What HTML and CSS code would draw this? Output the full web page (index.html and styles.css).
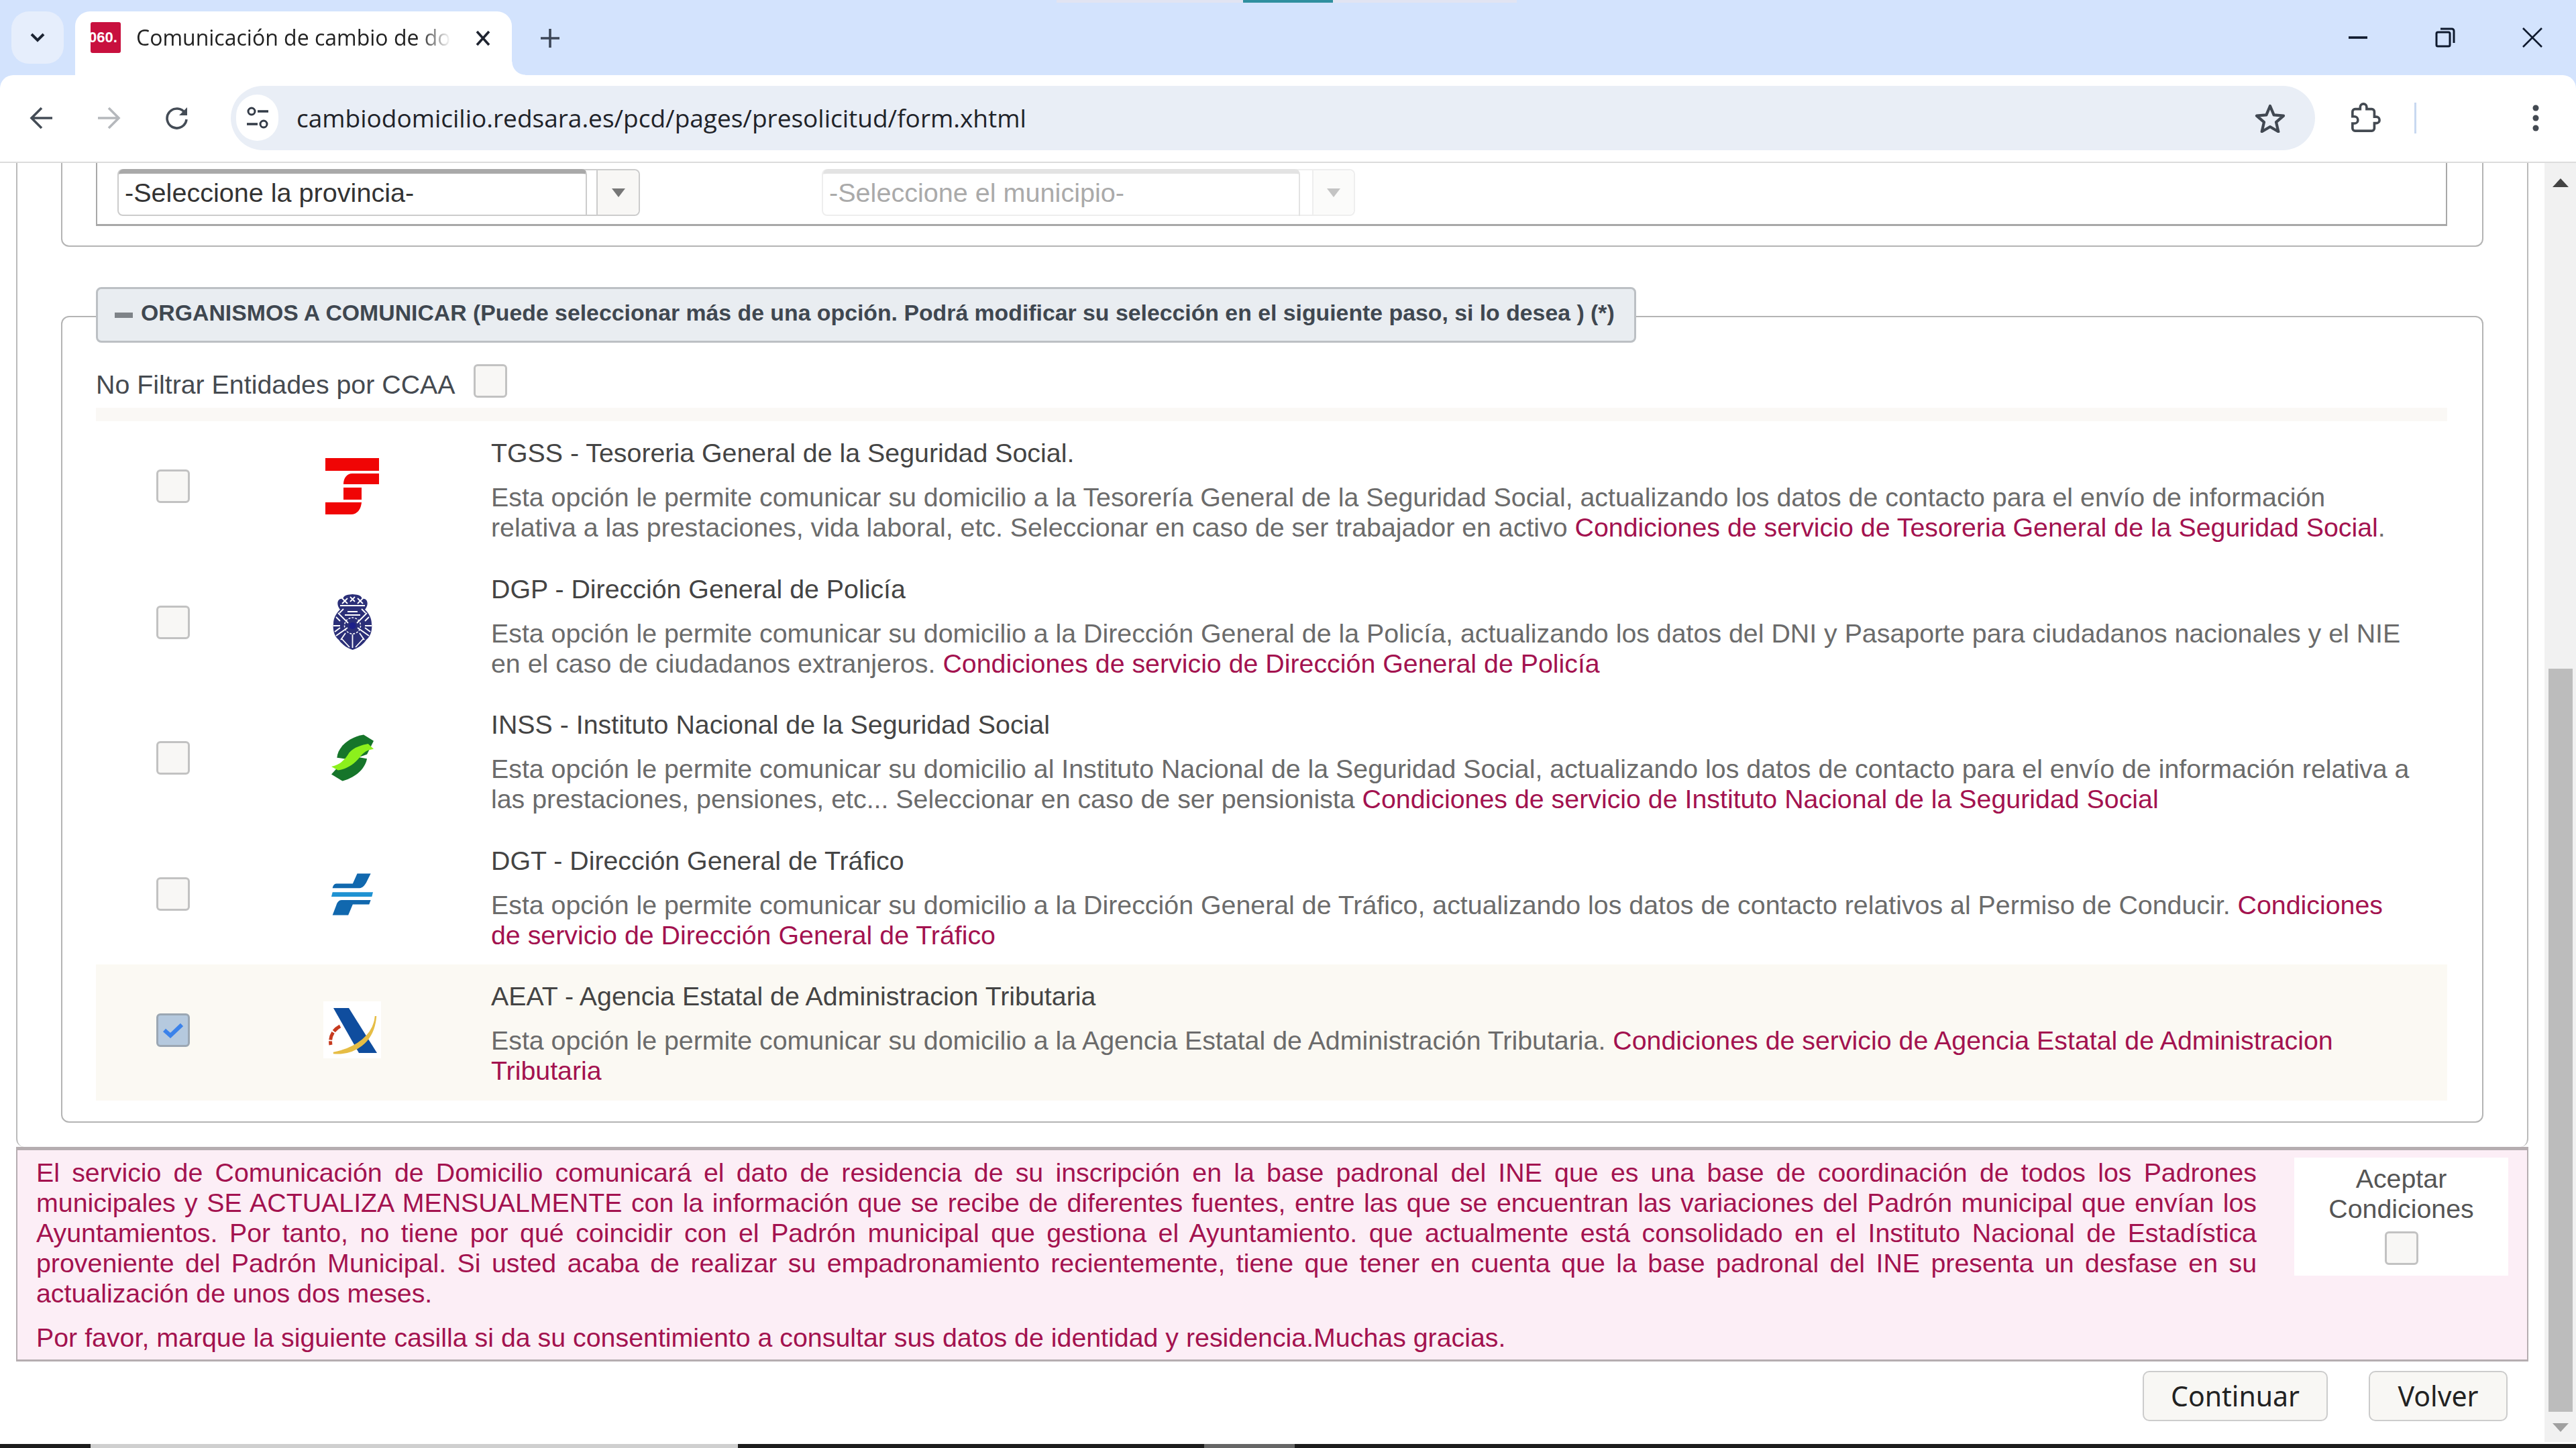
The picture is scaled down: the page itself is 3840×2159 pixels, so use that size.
FILE: index.html
```html
<!DOCTYPE html>
<html lang="es">
<head>
<meta charset="utf-8">
<title>Comunicación de cambio de domicilio</title>
<link rel="stylesheet" href="styles.css">
</head>
<body>
<div class="page">
  <header class="chrome">
    <div class="capture-bar"><span class="capture-active"></span></div>
    <div class="tabstrip">
      <button class="tab-search"><svg width="24" height="16" viewBox="0 0 24 16"><path d="M3 3l9 9 9-9" fill="none" stroke="#1c2433" stroke-width="4"/></svg></button>
      <div class="tab">
        <span class="favicon">060.</span>
        <span class="tab-title">Comunicación de cambio de domicilio</span>
        <svg class="tab-close" width="24" height="24" viewBox="0 0 24 24"><path d="M3 2l18 20M21 2L3 22" stroke="#1f2430" stroke-width="3.6" fill="none"/></svg>
      </div>
      <svg class="new-tab" width="32" height="32" viewBox="0 0 32 32"><path d="M16 2v28M2 16h28" stroke="#3c4657" stroke-width="3.6" fill="none"/></svg>
      <div class="window-controls">
        <svg width="30" height="30" viewBox="0 0 30 30"><path d="M1 15h28" stroke="#0f1a2e" stroke-width="3.6"/></svg>
        <svg width="30" height="30" viewBox="0 0 30 30"><rect x="2" y="7" width="20" height="21" rx="2" fill="none" stroke="#0f1a2e" stroke-width="3"/><path d="M8 2h17a3 3 0 0 1 3 3v18" fill="none" stroke="#0f1a2e" stroke-width="3"/></svg>
        <svg width="30" height="30" viewBox="0 0 30 30"><path d="M1 1l28 28M29 1L1 29" stroke="#0f1a2e" stroke-width="2.6"/></svg>
      </div>
    </div>
    <div class="toolbar">
      <svg class="nav nav-back" width="36" height="36" viewBox="0 0 36 36"><path d="M34 18H5M18 3L3 18l15 15" fill="none" stroke="#444c56" stroke-width="3.6"/></svg>
      <svg class="nav nav-forward" width="36" height="36" viewBox="0 0 36 36"><path d="M2 18h29M18 3l15 15-15 15" fill="none" stroke="#b5b8bc" stroke-width="3.6"/></svg>
      <svg class="nav nav-reload" width="36" height="36" viewBox="0 0 36 36"><path d="M30 11A14.500 14.500 0 1 0 32 20" fill="none" stroke="#444c56" stroke-width="3.6"/><path d="M33 2v12H21z" fill="#444c56"/></svg>
      <div class="omnibox">
        <span class="site-info"><svg width="34" height="36" viewBox="0 0 34 36"><circle cx="8" cy="8" r="5" fill="none" stroke="#333b47" stroke-width="3"/><path d="M17 8h16M1 27h16" stroke="#333b47" stroke-width="3.600"/><circle cx="26" cy="27" r="5" fill="none" stroke="#333b47" stroke-width="3"/></svg></span>
        <span class="url">cambiodomicilio.redsara.es/pcd/pages/presolicitud/form.xhtml</span>
        <svg class="star" width="46" height="44" viewBox="0 0 46 44"><path d="M23 4l5.600 13.400 14.400 1.200-11 9.500 3.300 14.100L23 35l-12.300 7.200 3.300-14.100-11-9.500 14.400-1.200z" fill="none" stroke="#414852" stroke-width="4.200" stroke-linejoin="round"/></svg>
      </div>
      <svg class="extensions" width="46" height="46" viewBox="0 0 24 24"><path d="M20.500 11H19V7c0-1.100-.9-2-2-2h-4V3.500C13 2.120 11.880 1 10.500 1S8 2.120 8 3.500V5H4c-1.100 0-1.990.9-1.990 2v3.800H3.500c1.490 0 2.700 1.210 2.700 2.700s-1.210 2.700-2.700 2.700H2V20c0 1.100.9 2 2 2h13c1.100 0 2-.9 2-2v-4h1.500c1.380 0 2.500-1.120 2.500-2.500S21.880 11 20.500 11z" fill="none" stroke="#444a52" stroke-width="1.900"/></svg>
      <span class="toolbar-sep"></span>
      <svg class="menu-dots" width="10" height="40" viewBox="0 0 10 40"><circle cx="5" cy="5" r="4.500" fill="#444a52"/><circle cx="5" cy="20" r="4.500" fill="#444a52"/><circle cx="5" cy="35" r="4.500" fill="#444a52"/></svg>
    </div>
  </header>

  <div class="viewport">
    <main class="main">
      <section class="panel">
        <div class="fieldset-location">
          <div class="location-inner">
            <div class="select select-active">
              <span class="select-value">-Seleccione la provincia-</span>
              <span class="select-trigger"><span class="caret"></span></span>
            </div>
            <div class="select select-disabled">
              <span class="select-value">-Seleccione el municipio-</span>
              <span class="select-trigger"><span class="caret"></span></span>
            </div>
          </div>
        </div>

        <div class="organisms">
          <div class="legend">
            <span class="legend-minus"></span>
            <span class="legend-text">ORGANISMOS A COMUNICAR (Puede seleccionar más de una opción. Podrá modificar su selección en el siguiente paso, si lo desea ) (*)</span>
          </div>
          <div class="organisms-box">
            <div class="filter-row">
              <label class="filter-label">No Filtrar Entidades por CCAA</label>
              <span class="check"></span>
            </div>
            <div class="table-head"></div>

            <div class="org-row">
              <div class="cell-check"><span class="check"></span></div>
              <div class="cell-logo">
                <svg width="80" height="84" viewBox="0 0 80 84"><path d="M0 0h80v19H0zM40 23h40v16H27c0-9 5-16 13-16zM27 44h27v18H27zM0 66h54c-1 10-6 18-16 18H0z" fill="#f00505"/></svg>
              </div>
              <div class="cell-text">
                <h3 class="org-title">TGSS - Tesoreria General de la Seguridad Social.</h3>
                <p class="org-desc">Esta opción le permite comunicar su domicilio a la Tesorería General de la Seguridad Social, actualizando los datos de contacto para el envío de información relativa a las prestaciones, vida laboral, etc. Seleccionar en caso de ser trabajador en activo <a class="org-link">Condiciones de servicio de Tesoreria General de la Seguridad Social</a>.</p>
              </div>
            </div>

            <div class="org-row">
              <div class="cell-check"><span class="check"></span></div>
              <div class="cell-logo">
                <svg width="59" height="83" viewBox="0 0 59 83"><path d="M12 24C4 16 7 5 15 7c2-7 9-6 14.500-7C35 1 42 0 44 7c8-2 11 9 3 17z" fill="#2b2f78"/><path d="M29.500 83C20 80 13 74 9 68 1 62 0 50 1 44c0-8 4-16 11-22h35c7 6 11 14 11 22 1 6 0 18-8 24-4 6-11 12-20.500 15z" fill="#2b2f78"/><g fill="none" stroke="#fff" stroke-width="1.800"><path d="M14 6l8 8M22 6l-8 8M26 4l7 7M33 4l-7 7M37 6l8 8M45 6l-8 8M11 17h37M8 28l15 15M51 28L36 43M5 34l6 6M54 34l-6 6M5 62l17-12M54 62L37 50M29.500 60v20M13 66l12 13M46 66L34 79M1 47h10M48 47h10M3 56l8-6M56 56l-8-6M16 22l-6 6M43 22l6 6M19 58l-7 10M40 58l7 10M22 26h15M18 31h23"/><circle cx="29.500" cy="47" r="12" stroke-width="1.500" stroke-dasharray="3 2"/></g><circle cx="29.500" cy="47" r="5" fill="#1c1f8a"/></svg>
              </div>
              <div class="cell-text">
                <h3 class="org-title">DGP - Dirección General de Policía</h3>
                <p class="org-desc">Esta opción le permite comunicar su domicilio a la Dirección General de la Policía, actualizando los datos del DNI y Pasaporte para ciudadanos nacionales y el NIE en el caso de ciudadanos extranjeros. <a class="org-link">Condiciones de servicio de Dirección General de Policía</a></p>
              </div>
            </div>

            <div class="org-row">
              <div class="cell-check"><span class="check"></span></div>
              <div class="cell-logo">
                <svg width="63" height="82" viewBox="0 0 190 208"><path d="M25 103C30 50 85 10 145 0l45 28-30 60-70 25z" fill="#16752a"/><path d="M160 108c-10 52-60 87-110 100L0 178l45-50 60-30z" fill="#16752a"/><path d="M0 143c40-10 62-30 80-62 20-25 60-35 85-40l25 23c-40 6-50 22-70 46-30 34-70 48-90 50z" fill="#8cf01c"/></svg>
              </div>
              <div class="cell-text">
                <h3 class="org-title">INSS - Instituto Nacional de la Seguridad Social</h3>
                <p class="org-desc">Esta opción le permite comunicar su domicilio al Instituto Nacional de la Seguridad Social, actualizando los datos de contacto para el envío de información relativa a las prestaciones, pensiones, etc... Seleccionar en caso de ser pensionista <a class="org-link">Condiciones de servicio de Instituto Nacional de la Seguridad Social</a></p>
              </div>
            </div>

            <div class="org-row">
              <div class="cell-check"><span class="check"></span></div>
              <div class="cell-logo">
                <svg width="62" height="73" viewBox="0 0 185 185"><path d="M22 45h73l20-45h60l-20 40c-10 18-20 25-35 25H5c2-10 8-20 17-20z" fill="#1168ae"/><path d="M5 83h180l-5 20H0z" fill="#1f92d2"/><path d="M45 118h130l-7 19H95l-20 48H5l17-45c4-12 12-22 23-22z" fill="#1168ae"/></svg>
              </div>
              <div class="cell-text">
                <h3 class="org-title">DGT - Dirección General de Tráfico</h3>
                <p class="org-desc">Esta opción le permite comunicar su domicilio a la Dirección General de Tráfico, actualizando los datos de contacto relativos al Permiso de Conducir. <a class="org-link">Condiciones de servicio de Dirección General de Tráfico</a></p>
              </div>
            </div>

            <div class="org-row org-row-selected">
              <div class="cell-check"><span class="check check-on"><svg width="30" height="24" viewBox="0 0 30 24"><path d="M2 12l9 8L28 4" fill="none" stroke="#3b82ea" stroke-width="6"/></svg></span></div>
              <div class="cell-logo">
                <svg width="86" height="85" viewBox="0 0 86 85"><rect width="86" height="85" fill="#fff"/><path d="M15 10h23l42 67H53z" fill="#0f4d9e"/><path d="M78 22C76 50 50 70 15 77c30 3 60-15 63-55z" fill="#e6bd45" stroke="#e6bd45" stroke-width="2.500"/><path d="M25 37C14 43 9 53 11 65" fill="none" stroke="#c63a1e" stroke-width="5" stroke-dasharray="12 2"/></svg>
              </div>
              <div class="cell-text">
                <h3 class="org-title">AEAT - Agencia Estatal de Administracion Tributaria</h3>
                <p class="org-desc">Esta opción le permite comunicar su domicilio a la Agencia Estatal de Administración Tributaria. <a class="org-link">Condiciones de servicio de Agencia Estatal de Administracion Tributaria</a></p>
              </div>
            </div>
          </div>
        </div>
      </section>

      <section class="notice">
        <div class="notice-text">
          <p class="notice-main">El servicio de Comunicación de Domicilio comunicará el dato de residencia de su inscripción en la base padronal del INE que es una base de coordinación de todos los Padrones municipales y SE ACTUALIZA MENSUALMENTE con la información que se recibe de diferentes fuentes, entre las que se encuentran las variaciones del Padrón municipal que envían los Ayuntamientos. Por tanto, no tiene por qué coincidir con el Padrón municipal que gestiona el Ayuntamiento. que actualmente está consolidado en el Instituto Nacional de Estadística proveniente del Padrón Municipal. Si usted acaba de realizar su empadronamiento recientemente, tiene que tener en cuenta que la base padronal del INE presenta un desfase en su actualización de unos dos meses.</p>
          <p class="notice-second">Por favor, marque la siguiente casilla si da su consentimiento a consultar sus datos de identidad y residencia.Muchas gracias.</p>
        </div>
        <div class="accept">
          <span class="accept-label">Aceptar Condiciones</span>
          <span class="check"></span>
        </div>
      </section>

      <div class="actions">
        <button class="btn btn-continue">Continuar</button>
        <button class="btn btn-back">Volver</button>
      </div>
    </main>

    <aside class="scrollbar">
      <span class="arrow-up"></span>
      <span class="thumb"></span>
      <span class="arrow-down"></span>
    </aside>
  </div>

  <footer class="taskbar">
    <span class="task task-a"></span>
    <span class="task task-b"></span>
    <span class="task task-c"></span>
    <span class="task task-d"></span>
    <span class="task task-e"></span>
  </footer>
</div>
</body>
</html>
```

FILE: styles.css
```css
* { box-sizing: border-box; }
html, body { margin: 0; padding: 0; background: #fff; }
body { font-family: "Liberation Sans", Arial, sans-serif; }
h3, p { margin: 0; font-weight: normal; }
button { font: inherit; }

.page { width: 3840px; height: 2159px; display: flex; flex-direction: column; overflow: hidden; }

/* Browser chrome */
.chrome { position: relative; height: 243px; flex: none; background: #d3e3fd; }
.capture-bar { position: absolute; top: 0; left: 1575px; width: 686px; height: 4px; background: #e1e4f2; }
.capture-active { position: absolute; top: 0; left: 278px; width: 134px; height: 4px; background: #2f8f9f; }
.tabstrip { height: 112px; display: flex; align-items: flex-start; padding: 17px 0 0 17px; }
.tab-search { width: 78px; height: 78px; border: 0; border-radius: 26px; background: #e6eefc; display: flex; align-items: center; justify-content: center; padding: 0; }
.tab { position: relative; width: 651px; height: 95px; margin-left: 17px; background: #fff; border-radius: 22px 22px 0 0; display: flex; align-items: flex-start; padding: 16px 0 0 23px; }
.tab::after { content: ""; position: absolute; right: -20px; bottom: 0; width: 20px; height: 20px; background: radial-gradient(circle at 100% 0, transparent 19px, #fff 20px); }
.favicon { width: 45px; height: 46px; background: #c8103e; color: #fff; font: bold 22px/46px "Liberation Sans Narrow", "Liberation Sans", sans-serif; overflow: hidden; border-radius: 3px; flex: none; white-space: nowrap; text-indent: -3px; }
.tab-title { width: 469px; margin-left: 23px; font: 32px/46px "Open Sans", sans-serif; color: #222; white-space: nowrap; overflow: hidden; flex: none; -webkit-mask-image: linear-gradient(90deg, #000 90%, transparent); mask-image: linear-gradient(90deg, #000 90%, transparent); }
.tab-close { margin: 12px 0 0 36px; flex: none; }
.new-tab { margin: 24px 0 0 41px; flex: none; }
.window-controls { margin-left: auto; display: flex; gap: 100px; padding: 24px 50px 0 0; }

.toolbar { height: 131px; background: #fff; border-radius: 20px 20px 0 0; border-bottom: 2px solid #dcdcdc; display: flex; align-items: center; padding-bottom: 2px; }
.nav { flex: none; }
.nav-back { margin-left: 44px; }
.nav-forward { margin-left: 64px; }
.nav-reload { margin-left: 66px; }
.omnibox { width: 3107px; height: 96px; margin-left: 62px; background: #e9eef6; border-radius: 48px; display: flex; align-items: center; padding-left: 8px; flex: none; }
.site-info { width: 63px; height: 69px; background: #fff; border-radius: 34px; display: flex; align-items: center; justify-content: center; flex: none; }
.url { margin-left: 27px; font: 37px/48px "Open Sans", sans-serif; color: #1f2329; white-space: nowrap; flex: none; }
.star { margin-left: auto; margin-right: 44px; flex: none; }
.extensions { margin-left: 52px; flex: none; }
.toolbar-sep { width: 3px; height: 46px; margin-left: 50px; background: #c8d8f0; flex: none; }
.menu-dots { margin-left: 173px; flex: none; }

/* Page content */
.viewport { flex: 1; display: flex; min-height: 0; }
.main { width: 3793px; padding-left: 24px; flex: none; display: flex; flex-direction: column; }

.panel { width: 3745px; height: 1467px; border: solid #bbb; border-width: 0 2px; border-radius: 0 0 12px 12px; flex: none; padding: 0 65px; }

.fieldset-location { height: 125px; border: 2px solid #b4b4b4; border-top: 0; border-radius: 0 0 12px 12px; padding: 0 52px 0 50px; }
.location-inner { height: 94px; border: solid #a8a8a8; border-width: 0 2px 3px; padding: 9px 0 0 30px; display: flex; gap: 271px; }
.select { height: 70px; display: flex; border: 2px solid #ccc; border-radius: 8px; font-size: 39.600px; }
.select-value { height: 70px; padding: 0 9px; margin-top: -2px; border-right: 2px solid #ccc; border-top: 7px solid #a9a9a9; border-radius: 8px 8px 0 0; white-space: nowrap; line-height: 56px; flex: none; }
.select-trigger { background: #f8f7f5; display: flex; align-items: center; justify-content: center; border-radius: 0 8px 8px 0; border-left: 2px solid #ccc; flex: none; margin-left: 14px; }
.select-active { width: 779px; }
.select-active .select-value { width: 698px; color: #333; }
.select-active .select-trigger { width: 63px; }
.select-disabled { width: 795px; border-color: #eee; }
.select-disabled .select-value { width: 711px; color: #aaa; border-color: #e3e3e3; }
.select-disabled .select-trigger { width: 62px; margin-left: 18px; background: #fbfbfa; border-left-color: #eee; }
.caret { width: 0; height: 0; border: solid transparent; border-width: 13px 10px 0; border-top-color: #777; }
.select-disabled .caret { border-top-color: #c4c4c4; }

.organisms { margin-top: 60px; }
.legend { position: relative; z-index: 1; width: 2296px; height: 83px; margin-left: 52px; background: #e9edf1; border: 3px solid #bcc0c4; border-radius: 8px; display: flex; align-items: center; padding: 0 0 8px 25px; }
.legend-minus { width: 27px; height: 8px; margin-top: 8px; background: #7e8388; flex: none; }
.legend-text { margin-left: 12px; font: bold 33.800px/40px "Liberation Sans", sans-serif; color: #3f4750; white-space: nowrap; }
.organisms-box { height: 1203px; margin-top: -40px; border: 2px solid #b4b4b4; border-radius: 12px; padding: 0 52px 0 50px; }
.filter-row { height: 135px; padding-top: 70px; display: flex; align-items: flex-start; }
.filter-label { font-size: 39.350px; line-height: 60px; color: #454a50; }
.filter-row .check { margin-left: 27px; }
.table-head { height: 20px; background: #faf8f5; }

.check { width: 50px; height: 50px; flex: none; display: flex; align-items: center; justify-content: center; background: #f8f7f5; border: 3px solid #c2c2c2; border-radius: 6px; }
.check-on { background: #b5c9de; border-color: #9ba7b3; }

.org-row { height: 202.600px; display: grid; grid-template-columns: 228px 308px 1fr; }
.org-row-selected { background: #fbf9f3; }
.cell-check { display: flex; align-items: center; justify-content: flex-end; padding: 0 88px 8px 0; }
.cell-logo { display: flex; align-items: center; justify-content: center; padding-bottom: 8px; }
.cell-text { width: 2913px; padding: 25px 0 0 53px; }
.org-title { font-size: 39.350px; line-height: 45px; color: #444; }
.org-desc { margin-top: 21px; font-size: 39.350px; line-height: 45px; color: #6b6b6b; }
.org-link { color: #a3124f; }

.notice { width: 3745px; height: 320px; flex: none; background: #fceef6; border: solid #b5adb0; border-width: 5px 2px 3px; display: flex; align-items: flex-start; padding: 11px 28px 0 28px; color: #a3124f; font-size: 39.350px; line-height: 45px; }
.notice-text { width: 3310px; flex: none; }
.notice-main { text-align: justify; }
.notice-second { margin-top: 21px; }
.accept { width: 319px; height: 176px; margin: 0 0 0 56px; background: #fff; flex: none; display: flex; flex-direction: column; align-items: center; padding-top: 9px; color: #555; text-align: center; }
.accept-label { width: 280px; }
.accept .check { margin-top: 11px; }

.actions { display: flex; justify-content: flex-end; gap: 61px; width: 3714px; padding-top: 14px; }
.btn { height: 75px; border: 2px solid #ccc; border-radius: 10px; background: #f8f7f4; color: #222; font: 41px/1 "Noto Sans", sans-serif; padding: 0; }
.btn-continue { width: 276px; }
.btn-back { width: 207px; }

/* Scrollbar */
.scrollbar { width: 47px; flex: none; background: #f1f1f1; display: flex; flex-direction: column; align-items: center; height: 1907px; }
.arrow-up { width: 0; height: 0; margin-top: 23px; border: solid transparent; border-width: 0 12px 13px; border-bottom-color: #444; }
.thumb { width: 36px; height: 1108px; margin-top: 718px; background: #bcbcbc; }
.arrow-down { width: 0; height: 0; margin-top: 17px; border: solid transparent; border-width: 13px 12px 0; border-top-color: #a0a0a0; }

/* Taskbar */
.taskbar { height: 6px; flex: none; display: flex; background: #1c1c1c; }
.task { display: block; height: 100%; }
.task-a { width: 135px; background: #1c1c1c; }
.task-b { width: 965px; background: #cfcfcf; }
.task-c { width: 695px; background: #1c1c1c; }
.task-d { width: 135px; background: #666; }
.task-e { flex: 1; background: #1c1c1c; }
```
